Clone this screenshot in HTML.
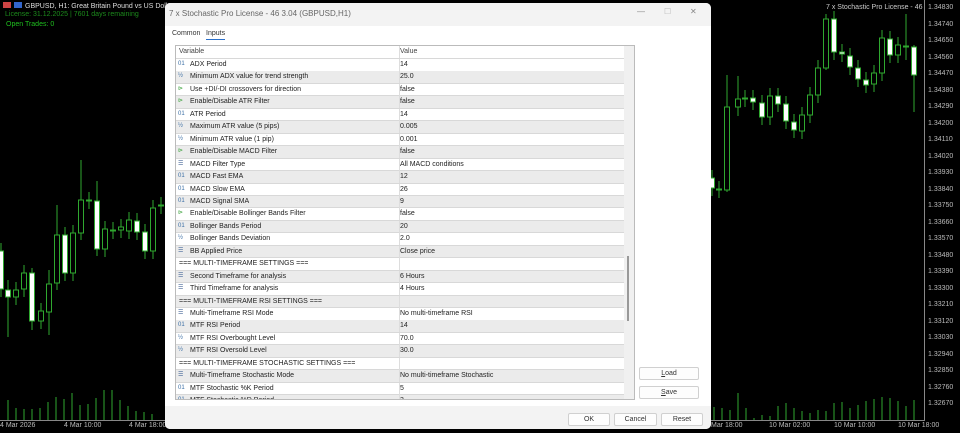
<!DOCTYPE html>
<html><head><meta charset="utf-8"><style>
*{margin:0;padding:0;box-sizing:border-box}
body{width:960px;height:433px;background:#000;position:relative;overflow:hidden;font-family:"Liberation Sans",sans-serif;font-size:7px;color:#222}
.a{position:absolute}
.pl{position:absolute;left:928px;color:#bbb;font-size:7px}
.tl{position:absolute;top:422px;color:#bbb;font-size:7px;white-space:nowrap}
.dlg{position:absolute;left:165px;top:3px;width:546px;height:426px;background:#fff;border-radius:5px;overflow:hidden}
.tb{position:absolute;left:0;top:0;width:546px;height:23px;background:#f3f3f3;color:#666;font-size:8px;padding:6px 0 0 4px}
.tbl{position:absolute;left:10px;top:42px;width:460px;height:355px;border:1px solid #bbb;overflow:hidden}
.r{position:absolute;left:0;width:449px;height:12.5px;border-bottom:1px solid #d8d8d8;font-size:7px;line-height:11px;white-space:nowrap}
.r.g{background:#ebebeb}
.r .n{position:absolute;left:14px}
.r .v{position:absolute;left:224px}
.r .i{position:absolute;left:2px;font-size:6px;color:#3a6ea5}
.r .c{position:absolute;left:223px;top:0;height:12px;border-left:1px solid #ddd}
.btn{position:absolute;background:#fdfdfd;border:1px solid #d0d0d0;border-radius:2px;text-align:center;font-size:7px;line-height:11px;color:#333}
</style></head><body>
<svg class="a" style="left:0;top:0" width="960" height="433">
<g stroke="#2fa82f" stroke-width="1" fill="none" id="c"></g>
</svg>
<div class="a" style="left:3px;top:2px;color:#ddd;font-size:7px"><span style="display:inline-block;width:8px;height:6px;background:#c44;margin-right:3px"></span><span style="display:inline-block;width:8px;height:6px;background:#36c;margin-right:3px"></span>GBPUSD, H1: Great Britain Pound vs US Dollar</div>
<div class="a" style="left:5px;top:11px;color:#1c8a1c;font-size:7px">License: 31.12.2025 | 7601 days remaining</div>
<div class="a" style="left:6px;top:21px;color:#1fbf1f;font-size:7px">Open Trades: 0</div>
<div class="a" style="left:826px;top:4px;color:#ccc;font-size:7px">7 x Stochastic Pro License - 46</div>
<div class="a" style="left:924px;top:0;width:1px;height:420px;background:#888"></div>
<div class="a" style="left:0;top:420px;width:925px;height:1px;background:#888"></div>
<div id="pl"></div>
<div class="tl" style="left:0">4 Mar 2026</div>
<div class="tl" style="left:64px">4 Mar 10:00</div>
<div class="tl" style="left:129px">4 Mar 18:00</div>
<div class="tl" style="left:711px">Mar 18:00</div>
<div class="tl" style="left:769px">10 Mar 02:00</div>
<div class="tl" style="left:834px">10 Mar 10:00</div>
<div class="tl" style="left:898px">10 Mar 18:00</div>

<div class="dlg">
<div class="tb">7 x Stochastic Pro License - 46 3.04 (GBPUSD,H1)<span style="position:absolute;left:472px;top:4px;color:#888">—</span><span style="position:absolute;left:499px;top:4px;color:#bbb">☐</span><span style="position:absolute;left:525px;top:4px;color:#888">✕</span></div>
<div class="a" style="left:7px;top:27px;font-size:7px;color:#333">Common</div>
<div class="a" style="left:41px;top:27px;font-size:7px;color:#333;border-bottom:1px solid #2a6fc9;padding-bottom:2px">Inputs</div>
<div class="tbl" id="tbl">
<div class="r" style="top:0;height:13px;color:#444"><span class="n" style="left:3px">Variable</span><span class="c"></span><span class="v">Value</span></div>
</div>
<div class="a" style="left:459px;top:43px;width:10px;height:353px;background:#f0f0f0"></div>
<div class="a" style="left:462px;top:253px;width:2px;height:65px;background:#999"></div>
<div class="btn" style="left:474px;top:364px;width:60px;height:13px"><u>L</u>oad</div>
<div class="btn" style="left:474px;top:383px;width:60px;height:13px"><u>S</u>ave</div>
<div class="a" style="left:0;top:403px;width:546px;height:23px;background:#f3f3f3"></div>
<div class="btn" style="left:403px;top:410px;width:42px;height:13px">OK</div>
<div class="btn" style="left:449px;top:410px;width:43px;height:13px">Cancel</div>
<div class="btn" style="left:496px;top:410px;width:42px;height:13px">Reset</div>
</div>
<script>
var rows=[["01","ADX Period","14"],["½","Minimum ADX value for trend strength","25.0"],["⊳","Use +DI/-DI crossovers for direction","false"],["⊳","Enable/Disable ATR Filter","false"],["01","ATR Period","14"],["½","Maximum ATR value (5 pips)","0.005"],["½","Minimum ATR value (1 pip)","0.001"],["⊳","Enable/Disable MACD Filter","false"],["☰","MACD Filter Type","All MACD conditions"],["01","MACD Fast EMA","12"],["01","MACD Slow EMA","26"],["01","MACD Signal SMA","9"],["⊳","Enable/Disable Bollinger Bands Filter","false"],["01","Bollinger Bands Period","20"],["½","Bollinger Bands Deviation","2.0"],["☰","BB Applied Price","Close price"],["","=== MULTI-TIMEFRAME SETTINGS ===",""],["☰","Second Timeframe for analysis","6 Hours"],["☰","Third Timeframe for analysis","4 Hours"],["","=== MULTI-TIMEFRAME RSI SETTINGS ===",""],["☰","Multi-Timeframe RSI Mode","No multi-timeframe RSI"],["01","MTF RSI Period","14"],["½","MTF RSI Overbought Level","70.0"],["½","MTF RSI Oversold Level","30.0"],["","=== MULTI-TIMEFRAME STOCHASTIC SETTINGS ===",""],["☰","Multi-Timeframe Stochastic Mode","No multi-timeframe Stochastic"],["01","MTF Stochastic %K Period","5"],["01","MTF Stochastic %D Period","3"]];
var t=document.getElementById('tbl'),h='';
rows.forEach(function(r,k){var y=13+k*12.45;var col=r[0]=="⊳"?"#2a9a2a":(r[0]=="☰"?"#4a6a9a":"#3a6ea5");
h+='<div class="r'+(k%2?' g':'')+'" style="top:'+y+'px">'+(r[0]?'<span class="i" style="color:'+col+'">'+r[0]+'</span>':'')+'<span class="n" style="'+(r[0]?'':'left:3px')+'">'+r[1]+'</span><span class="c"></span><span class="v">'+r[2]+'</span></div>';});
t.innerHTML+=h;
var p='';for(var i=0;i<25;i++){var v=(1.34830-i*0.0009).toFixed(5);p+='<div class="pl" style="top:'+(4+i*16.5)+'px">'+v+'</div>';}
document.getElementById('pl').innerHTML=p;
var C=[[1,251,289,1],[8,290,297,1,280,337],[16,290,297,0],[24,273,289,0],[32,273,321,1,268,330],[41,311,321,0],[49,284,312,0,270,335],[57,235,283,0,205,290],[65,235,273,1],[73,233,273,0],[81,200,233,0,160,240],[89,200,201,1],[97,201,249,1,181,256],[105,229,249,0],[113,230,231,1],[121,227,230,0],[129,220,231,0],[137,221,232,1],[145,232,251,1],[153,208,251,0],[161,205,206,1],
[712,178,188,1],[719,189,190,1],[727,107,190,0,75,192],[738,99,107,0,76,116],[745,98,99,1],[753,98,102,1],[762,103,117,1],[770,96,117,0],[778,96,104,1],[786,104,121,1],[794,122,130,1],[802,115,131,0],[810,95,115,0],[818,68,95,0],[826,19,68,0,14,70],[834,19,52,1],[842,52,54,1],[850,56,67,1],[858,68,79,1],[866,80,85,1],[874,73,84,0],[882,38,73,0],[890,39,55,1],[898,45,55,0],[906,46,47,1,14,60],[914,47,75,1,45,112]];
var s='';C.forEach(function(c){var wt=c[4]||c[1]-8,wb=c[5]||c[2]+8;s+='<line x1="'+c[0]+'" y1="'+wt+'" x2="'+c[0]+'" y2="'+wb+'"/>';s+='<rect x="'+(c[0]-2.5)+'" y="'+c[1]+'" width="5" height="'+Math.max(1,c[2]-c[1])+'" fill="'+(c[3]?'#fff':'#000')+'"/>';});
var lv=[20,12,11,11,12,18,23,21,27,15,16,22,30,30,20,14,9,8,6];
for(var k=0;k<lv.length;k++){var x=8+k*8;s+='<line x1="'+x+'" y1="'+(420-lv[k])+'" x2="'+x+'" y2="420"/>';}
var rv=[13,12,10,27,12,2,5,4,14,17,12,9,7,10,9,17,18,12,15,19,21,23,22,19,14,20,20];
for(var k=0;k<rv.length;k+=1){var x=714+k*8;if(x>920)break;s+='<line x1="'+x+'" y1="'+(420-rv[k])+'" x2="'+x+'" y2="420"/>';}
document.getElementById('c').innerHTML=s;
</script>
</body></html>
